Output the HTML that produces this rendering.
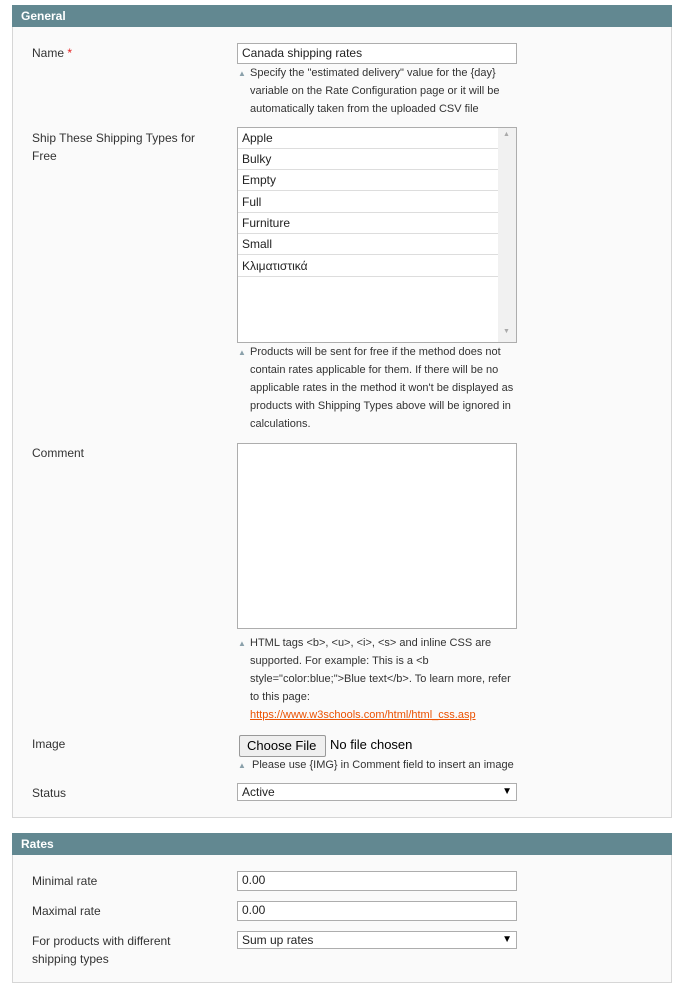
<!DOCTYPE html>
<html><head><meta charset="utf-8"><style>
*{box-sizing:border-box;margin:0;padding:0}
body{width:685px;height:989px;background:#fff;font-family:"Liberation Sans",Arial,sans-serif;font-size:12px;color:#333;position:relative;overflow:hidden}
.a{position:absolute}
.hd{position:absolute;left:12px;width:660px;height:22px;background:#628891;color:#fff;font-weight:bold;font-size:12px;padding:4px 0 0 9px}
.pn{position:absolute;left:12px;width:660px;background:#fafafa;border:1px solid #d6d6d6;border-top:none}
.lb{position:absolute;left:32px;font-size:12px;color:#333;line-height:18px}
.in{position:absolute;left:237px;width:280px;background:#fff;border:1px solid #adadad;font-size:12px;padding:1px 4px;color:#222}
.nt{position:absolute;left:250px;width:270px;font-size:11px;line-height:18px;color:#333}
.tr{position:absolute;left:238px;font-size:8px;color:#8aa0aa}
.it{position:absolute;left:238px;width:260px;height:21px;border-bottom:1px solid #ddd;padding:3px 0 0 4px;font-size:12px;color:#222}
.ar{position:absolute;right:4px;top:2px;font-size:10px;color:#000}
</style></head><body>
<div class="hd" style="top:5px">General</div>
<div class="pn" style="top:27px;height:791px"></div>
<div class="lb" style="top:44px">Name <span style="color:#e41d1d">*</span></div>
<div class="in" style="top:43px;height:21px;padding-top:2px">Canada shipping rates</div>
<div class="tr" style="top:69px">▲</div>
<div class="nt" style="top:64px">Specify the "estimated delivery" value for the {day} variable on the Rate Configuration page or it will be automatically taken from the uploaded CSV file</div>

<div class="lb" style="top:129px;width:180px">Ship These Shipping Types for Free</div>
<div class="a" style="left:237px;top:127px;width:280px;height:216px;background:#fff;border:1px solid #adadad"></div>
<div class="a" style="left:498px;top:128px;width:18px;height:214px;background:#f1f1f1"></div>
<div class="a" style="left:503px;top:131px;font-size:7px;color:#aaa">▲</div>
<div class="a" style="left:503px;top:328px;font-size:7px;color:#aaa">▼</div>
<div class="it" style="top:128px">Apple</div>
<div class="it" style="top:149px">Bulky</div>
<div class="it" style="top:170px">Empty</div>
<div class="it" style="top:192px">Full</div>
<div class="it" style="top:213px">Furniture</div>
<div class="it" style="top:234px">Small</div>
<div class="it" style="top:256px">Κλιματιστικά</div>
<div class="tr" style="top:348px">▲</div>
<div class="nt" style="top:343px">Products will be sent for free if the method does not contain rates applicable for them. If there will be no applicable rates in the method it won't be displayed as products with Shipping Types above will be ignored in calculations.</div>

<div class="lb" style="top:444px">Comment</div>
<div class="a" style="left:237px;top:443px;width:280px;height:186px;background:#fff;border:1px solid #adadad"></div>
<div class="tr" style="top:639px">▲</div>
<div class="nt" style="top:634px">HTML tags &lt;b&gt;, &lt;u&gt;, &lt;i&gt;, &lt;s&gt; and inline CSS are supported. For example: This is a &lt;b style="color:blue;"&gt;Blue text&lt;/b&gt;. To learn more, refer to this page: <span style="color:#eb5202;text-decoration:underline">https://www.w3schools.com/html/html_css.asp</span></div>

<div class="lb" style="top:735px">Image</div>
<div class="a" style="left:239px;top:735px;width:87px;height:22px;background:#efefef;border:1px solid #999;border-radius:2px;font-size:13px;padding:2px 0 0 7px;color:#000">Choose File</div>
<div class="a" style="left:330px;top:737px;font-size:13px;color:#000">No file chosen</div>
<div class="tr" style="top:761px">▲</div>
<div class="a" style="left:252px;top:758px;font-size:11px;line-height:14px;color:#333">Please use {IMG} in Comment field to insert an image</div>

<div class="lb" style="top:784px">Status</div>
<div class="in" style="top:783px;height:18px;padding-top:1px">Active<span class="ar">▼</span></div>

<div class="hd" style="top:833px">Rates</div>
<div class="pn" style="top:855px;height:128px"></div>
<div class="lb" style="top:872px">Minimal rate</div>
<div class="in" style="top:871px;height:20px">0.00</div>
<div class="lb" style="top:902px">Maximal rate</div>
<div class="in" style="top:901px;height:20px">0.00</div>
<div class="lb" style="top:932px;width:180px">For products with different shipping types</div>
<div class="in" style="top:931px;height:18px;padding-top:1px">Sum up rates<span class="ar">▼</span></div>
</body></html>
